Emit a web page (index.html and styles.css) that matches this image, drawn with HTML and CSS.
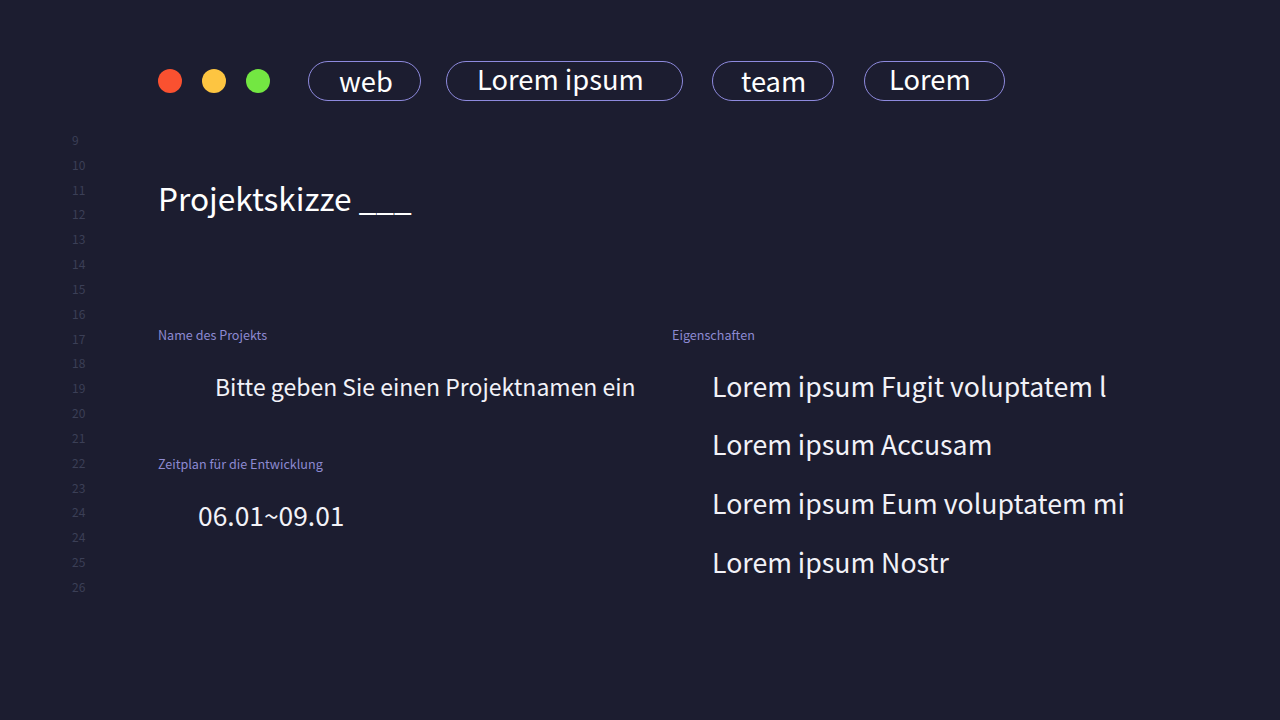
FILE: index.html
```html
<!DOCTYPE html>
<html lang="de">
<head>
<meta charset="utf-8">
<title>Projektskizze</title>
<link rel="stylesheet" href="styles.css">
</head>
<body>
<div class="window">
  <header class="topbar">
    <div class="lights">
      <span class="light red"></span>
      <span class="light yellow"></span>
      <span class="light green"></span>
    </div>
    <nav class="tags">
      <span class="tag tag-web">web</span>
      <span class="tag tag-lorem-ipsum">Lorem ipsum</span>
      <span class="tag tag-team">team</span>
      <span class="tag tag-lorem">Lorem</span>
    </nav>
  </header>
  <div class="editor">
    <ol class="gutter">
      <li>9</li><li>10</li><li>11</li><li>12</li><li>13</li><li>14</li><li>15</li><li>16</li><li>17</li><li>18</li><li>19</li><li>20</li><li>21</li><li>22</li><li>23</li><li>24</li><li>24</li><li>25</li><li>26</li>
    </ol>
    <main class="content">
      <h1 class="title">Projektskizze ___</h1>
      <div class="fields">
        <section class="col col-left">
          <div class="label">Name des Projekts</div>
          <div class="value value-name">Bitte geben Sie einen Projektnamen ein</div>
          <div class="label label-second">Zeitplan für die Entwicklung</div>
          <div class="value value-date">06.01~09.01</div>
        </section>
        <section class="col col-right">
          <div class="label">Eigenschaften</div>
          <ul class="props">
            <li>Lorem ipsum Fugit voluptatem l</li>
            <li>Lorem ipsum Accusam</li>
            <li>Lorem ipsum Eum voluptatem mi</li>
            <li>Lorem ipsum Nostr</li>
          </ul>
        </section>
      </div>
    </main>
  </div>
</div>
</body>
</html>
```

FILE: styles.css
```css
* { box-sizing: border-box; }
html, body {
  margin: 0;
  padding: 0;
  width: 1280px;
  height: 720px;
  overflow: hidden;
}
body {
  background: #1c1d30;
  font-family: "Noto Sans CJK SC", "Noto Sans", sans-serif;
  color: #f2f2f8;
}
.window {
  padding-top: 61px;
  height: 720px;
}
.topbar {
  display: flex;
  align-items: center;
  padding-left: 158px;
  height: 40px;
}
.lights {
  display: flex;
  gap: 20px;
  margin-right: 38px;
}
.light {
  width: 24px;
  height: 24px;
  border-radius: 50%;
  display: block;
}
.red { background: #fa5130; }
.yellow { background: #fdc541; }
.green { background: #73e742; }
.tags {
  display: flex;
  align-items: center;
}
.tag {
  height: 40px;
  border: 1.6px solid #8e8ade;
  border-radius: 20px;
  font-size: 27.3px;
  line-height: 33px;
  color: #ffffff;
  display: block;
  white-space: nowrap;
}
.tag-web { width: 113px; padding-left: 30px; margin-right: 25px; line-height: 37px; }
.tag-lorem-ipsum { width: 237px; padding-left: 30px; margin-right: 29px; }
.tag-team { width: 122px; padding-left: 28px; margin-right: 30px; line-height: 36px; }
.tag-lorem { width: 141px; padding-left: 24px; }

.editor {
  display: flex;
  margin-top: 27px;
}
.gutter {
  list-style: none;
  margin: 0;
  padding: 0 0 0 72px;
  width: 158px;
  font-size: 12px;
  line-height: 24.83px;
  color: #3b3f56;
}
.content {
  flex: 1;
}
.title {
  margin: 47px 0 0 0;
  font-size: 31.6px;
  font-weight: 400;
  line-height: 44px;
  color: #ffffff;
}
.fields {
  display: flex;
  margin-top: 106px;
}
.col-left { width: 514px; }
.col-right { flex: 1; }
.label {
  font-size: 12.6px;
  line-height: 20px;
  color: #8d8ad2;
  white-space: nowrap;
}
.value {
  font-size: 26.4px;
  line-height: 36px;
  color: #f2f2f8;
  white-space: nowrap;
}
.value-name {
  font-size: 23px;
  padding-left: 57px;
  margin-top: 23px;
}
.label-second {
  margin-top: 50px;
}
.value-date {
  padding-left: 40px;
  margin-top: 23px;
}
.props {
  list-style: none;
  margin: 11.5px 0 0 0;
  padding: 0 0 0 40px;
  font-size: 26.7px;
  line-height: 58.67px;
  color: #f2f2f8;
  white-space: nowrap;
}
```
